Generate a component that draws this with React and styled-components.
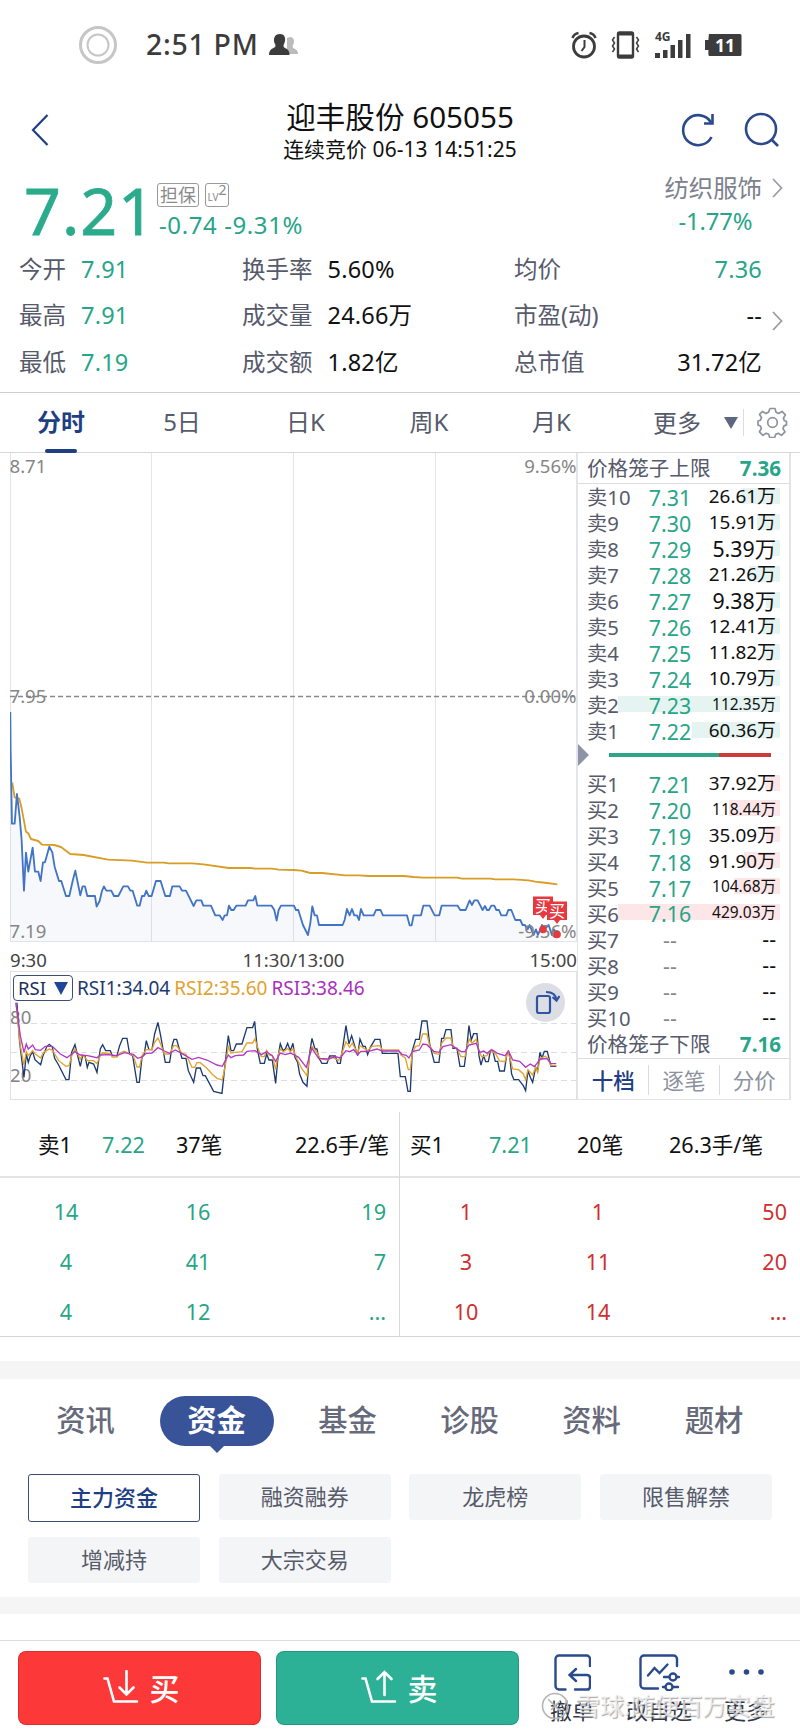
// src/App.jsx
import React from "react";
import styled, { createGlobalStyle } from "styled-components";

const GlobalStyle = createGlobalStyle`
  * { box-sizing: border-box; }
  body {
    margin: 0;
    background: #fff;
    font-family: "Noto Sans", "Noto Sans CJK SC", sans-serif;
    color: #111;
  }
`;

const GREEN = "#27a587";
const RED = "#cf3030";
const NAVY = "#1f3f83";
const GREY = "#565a6b";

const Page = styled.div`
  width: 800px;
  height: 1733px;
  overflow: hidden;
  display: flex;
  flex-direction: column;
  white-space: nowrap;
  line-height: 1;
`;

/* ---------- status bar ---------- */

const StatusBar = styled.div`
  height: 88px;
  padding: 2px 58px 0 78px;
  display: flex;
  align-items: center;
  justify-content: space-between;
`;

const StatusSide = styled.div`
  display: flex;
  align-items: center;
  gap: ${p => p.gap};
`;

const Clock = styled.span`
  font-size: 28.5px;
  font-weight: 500;
  letter-spacing: 0.7px;
  color: #3c3c3c;
  margin: 0 10px 1px 28px;
`;

/* ---------- header ---------- */

const Header = styled.header`
  height: 86px;
  display: grid;
  grid-template-columns: 200px 1fr 200px;
  align-items: center;
`;

const BackIcon = styled.svg`
  margin: 0 0 2px 30px;
`;

const Titles = styled.div`
  text-align: center;
`;

const Name = styled.h1`
  margin: 0;
  font-size: 29.6px;
  font-weight: 400;
  line-height: 36px;
`;

const Session = styled.div`
  font-size: 20.9px;
  letter-spacing: 0.1px;
  line-height: 29px;
`;

const HeaderActions = styled.div`
  display: flex;
  justify-content: flex-end;
  gap: 28px;
  padding: 0 20px 2px 0;
`;

/* ---------- quote ---------- */

const Quote = styled.section`
  height: 71px;
  display: flex;
  padding-left: 24px;
`;

const Price = styled.div`
  width: 135px;
  font-size: 64.5px;
  font-weight: 400;
  -webkit-text-stroke: 0.8px #2bab8c;
  letter-spacing: 1px;
  line-height: 73px;
  color: #2bab8c;
`;

const Change = styled.div`
  flex: 1;
  font-size: 24px;
  letter-spacing: 0.6px;
  color: ${GREEN};
  padding-top: 9px;
`;

const Badges = styled.div`
  display: flex;
  gap: 6px;
  margin: 0 0 6px -2px;
`;

const Badge = styled.span`
  height: 24px;
  width: ${p => p.w};
  border: 1px solid #999;
  border-radius: 3px;
  color: #8a8a8a;
  font-size: ${p => p.size};
  line-height: ${p => p.line};
  letter-spacing: 0;
  text-align: center;

  sup {
    font-size: 14px;
    line-height: 0;
    vertical-align: 6px;
  }
`;

const Sector = styled.div`
  padding: 0 17px 0 0;
  color: #7d818c;
  font-size: 24.4px;
  line-height: 28px;
`;

const SectorName = styled.div`
  display: flex;
  align-items: center;
  gap: 10px;
`;

const SectorChange = styled.div`
  padding: 5px 0 0 14px;
  font-size: 23.8px;
  letter-spacing: -0.1px;
  color: ${GREEN};
`;

const Stats = styled.section`
  height: 148px;
  border-bottom: 1px solid #cfcfcf;
  padding: 1px 17px 0 19px;
  display: grid;
  grid-template-columns: 223px 272px 248px 1fr;
  grid-template-rows: repeat(3, 46.8px);
  align-items: center;
  font-size: 23.5px;
`;

const Stat = styled.div`
  display: flex;
  justify-content: ${p => (p.spread ? "space-between" : "flex-start")};
  gap: 15px;
  color: ${GREY};

  b {
    font-weight: 400;
    letter-spacing: 0.2px;
    color: ${p => (p.green ? GREEN : "#111")};
  }
`;

const StatArrow = styled.svg`
  margin: 10px 0 0 10px;
`;

/* ---------- period tabs ---------- */

const Periods = styled.nav`
  height: 60px;
  border-bottom: 1px solid #d5d7da;
  display: grid;
  grid-template-columns: 122px 120px 127px 120px 125px 129px 1fr;
  align-items: center;
  color: ${GREY};
  font-size: 24px;
  text-align: center;
`;

const Period = styled.div`
  height: 59px;
  line-height: 58px;
  font-weight: ${p => (p.active ? 700 : 400)};
  color: ${p => (p.active ? NAVY : "inherit")};

  &::after {
    content: "";
    display: ${p => (p.active ? "block" : "none")};
    width: 32px;
    height: 4px;
    margin: -2px auto 0;
    border-radius: 2px;
    background: ${NAVY};
  }
`;

const MorePeriods = styled(Period)`
  display: flex;
  align-items: center;
  justify-content: flex-end;
  gap: 23px;
  padding-right: 5px;
`;

const Triangle = styled.i`
  border: 7px solid transparent;
  border-width: ${p => p.h} 7px 0;
  border-top-color: ${p => p.color};
`;

const Settings = styled.div`
  height: 27px;
  border-left: 1px solid #ddd;
  display: flex;
  align-items: center;
  padding-left: 13px;
`;

/* ---------- chart area ---------- */

const Market = styled.section`
  height: 648px;
  padding: 0 9px 0 10px;
  display: flex;
  border-bottom: 1px solid transparent;
`;

const Charts = styled.div`
  width: 567px;
  display: flex;
  flex-direction: column;
`;

const Chart = styled.svg`
  display: block;
  flex: none;
`;

const TimeAxis = styled.div`
  height: 30px;
  padding-top: 8px;
  display: grid;
  grid-template-columns: 1fr 1fr 1fr;
  align-items: center;
  font-size: 18.6px;
  color: #444;

  span:nth-child(2) { text-align: center; }
  span:nth-child(3) { text-align: right; }
`;

const Indicator = styled.div`
  height: 129px;
  border: 1px solid #e0e1e6;
  position: relative;
`;

const IndicatorBar = styled.div`
  position: absolute;
  top: 3px;
  left: 2px;
  display: flex;
  align-items: center;
  gap: 4px;
  font-size: 19px;
`;

const IndicatorPick = styled.span`
  width: 60px;
  height: 26px;
  border: 1px solid #3c5075;
  border-radius: 4px;
  display: flex;
  align-items: center;
  justify-content: center;
  gap: 8px;
  color: #1c2f5c;
  font-size: 18.5px;
`;

const Reading = styled.span`
  padding-top: 1px;
  color: ${p => p.color};
`;

const Rotate = styled.div`
  position: absolute;
  top: 11px;
  right: 11px;
  width: 39px;
  height: 39px;
  border-radius: 50%;
  background: #dddee5;
  display: flex;
  align-items: center;
  justify-content: center;
`;

/* ---------- order book ---------- */

const Book = styled.div`
  width: 214px;
  border: 1px solid #e3e4e8;
  border-width: 0 2px 1px 1px;
  font-size: 20.6px;
  color: ${GREY};
`;

const Cage = styled.div`
  height: ${p => p.h};
  padding: 1px 8px 0 9px;
  border-bottom: 1px solid #dcdde2;
  display: flex;
  align-items: center;
  justify-content: space-between;

  b {
    color: ${GREEN};
  }
`;

const Rows = styled.div`
  padding: 0 9px;
`;

const Row = styled.div`
  height: ${p => p.h};
  padding-top: 2px;
  display: grid;
  grid-template-columns: 53px 60px 1fr;
  align-items: center;
  position: relative;
`;

const DepthBar = styled.i`
  position: absolute;
  top: 4px;
  right: 0;
  height: 16px;
  background: ${p => (p.side === "sell" ? "#e5f4f0" : "#fde6e8")};
`;

const Level = styled.span`
  position: relative;
  font-size: 20.3px;
`;

const LevelPrice = styled.span`
  position: relative;
  font-size: 21.4px;
  text-align: center;
  color: ${p => (p.empty ? "#888" : GREEN)};
`;

const Quantity = styled.span`
  position: relative;
  top: -1px;
  padding-right: 4px;
  text-align: right;
  font-size: ${p => p.size}px;
  color: #111;
`;

const Balance = styled.div`
  height: 27px;
  display: flex;
  align-items: center;
  padding: 0 18px 4px 0;
`;

const Pointer = styled.i`
  border: 11px solid transparent;
  border-width: 11px 0 11px 11px;
  border-left-color: #8c94a6;
  margin-right: 20px;
`;

const Ratio = styled.i`
  height: 4px;
  flex: ${p => p.share};
  background: ${p => p.color};
`;

const BookTabs = styled.div`
  height: 43px;
  display: grid;
  grid-template-columns: repeat(3, 1fr);
  align-items: center;
`;

const BookTab = styled.div`
  height: 30px;
  line-height: 31px;
  text-align: center;
  font-size: 21.5px;
  font-weight: ${p => (p.active ? 500 : 400)};
  color: ${p => (p.active ? NAVY : "#8d92a0")};

  & + & { border-left: 1px solid #d9dbe0; }
`;

/* ---------- order queue ---------- */

const Queue = styled.section`
  height: 225px;
  margin-top: 11px;
  border-bottom: 1px solid #d4d4d4;
  display: grid;
  grid-template-columns: 399px 401px;
`;

const QueueSide = styled.div`
  color: ${p => p.color};
  font-size: 21.6px;

  & + & { border-left: 1px solid #d9d9d9; }
`;

const QueueHead = styled.div`
  height: 66px;
  border-bottom: 2px solid #e4e4e4;
  display: grid;
  grid-template-columns: ${p => p.cols};
  align-items: center;
  color: #111;
  padding: 2px ${p => p.right} 0 ${p => p.left};

  span:nth-child(2) { color: ${GREEN}; }
  span:last-child { text-align: right; }
`;

const QueueRow = styled.div`
  height: 50.3px;
  display: grid;
  grid-template-columns: 132px 132px 1fr;
  align-items: center;
  text-align: center;
  padding-right: 13px;

  &:nth-child(2) { margin-top: 8.5px; }
  span:last-child { text-align: right; }
`;

const Gap = styled.div`
  height: ${p => p.h};
  margin-top: ${p => p.top};
  background: #f5f5f5;
  flex: none;
`;

/* ---------- info tabs ---------- */

const Categories = styled.nav`
  height: 95px;
  padding: 17px 24px 0 25px;
  display: grid;
  grid-template-columns: 121px 141px 121px 123px 121px 1fr;
  justify-items: center;
`;

const Category = styled.div`
  position: relative;
  width: 114px;
  height: 50px;
  border-radius: 25px;
  line-height: 49px;
  text-align: center;
  font-size: 29.3px;
  font-weight: ${p => (p.active ? 700 : 500)};
  color: ${p => (p.active ? "#fff" : "#666a7a")};
  background: ${p => (p.active ? "#385397" : "transparent")};

  &::after {
    content: "";
    display: ${p => (p.active ? "block" : "none")};
    position: absolute;
    top: 49px;
    left: 49px;
    border: 8px solid transparent;
    border-top-color: #385397;
  }
`;

const Chips = styled.div`
  height: 123px;
  padding: 0 28px;
  display: grid;
  grid-template-columns: repeat(4, 172px);
  justify-content: space-between;
  align-items: start;
  grid-template-rows: 63px 60px;
`;

const Chip = styled.div`
  height: ${p => (p.active ? 48 : 46)}px;
  line-height: ${p => (p.active ? 45 : 43)}px;
  border: 1px solid ${p => (p.active ? "#3c4f75" : "#f4f5f6")};
  border-radius: 3px;
  background: ${p => (p.active ? "#fff" : "#f4f5f6")};
  color: ${p => (p.active ? NAVY : GREY)};
  font-weight: ${p => (p.active ? 500 : 400)};
  font-size: 22px;
  text-align: center;
`;

/* ---------- trade bar ---------- */

const TradeBar = styled.footer`
  flex: none;
  height: 93px;
  margin-top: 26px;
  border-top: 1px solid #ddd;
  padding: 10px 0 0 18px;
  display: flex;
  align-items: flex-start;
  position: relative;
`;

const TradeButton = styled.button`
  width: 243px;
  height: 74px;
  margin-right: 15px;
  padding: 0 0 2px 3px;
  border: 1px solid rgba(0, 0, 0, 0.15);
  border-radius: 8px;
  background: ${p => p.color};
  color: #fff;
  font: 500 30px "Noto Sans CJK SC", sans-serif;
  line-height: 1;
  display: flex;
  align-items: center;
  justify-content: center;
  gap: 11px;
`;

const Action = styled.div`
  width: ${p => p.w};
  height: 76px;
  padding-top: 3px;
  display: flex;
  flex-direction: column;
  align-items: center;
  gap: 8px;
  font-size: 22px;
  color: #32384a;
`;

const Watermark = styled.div`
  position: absolute;
  left: 541px;
  top: 51px;
  display: flex;
  align-items: center;
  gap: 7px;
  font-size: 24px;
  font-weight: 500;
  color: rgba(255, 255, 255, 0.7);
  text-shadow: 1px 1px 1px rgba(90, 90, 90, 0.5);
`;

/* ---------- data ---------- */

const periods = ["分时", "5日", "日K", "周K", "月K"];

const sells = [
  ["卖10", "7.31", "26.61万", 39],
  ["卖9", "7.30", "15.91万", 23],
  ["卖8", "7.29", "5.39万", 8],
  ["卖7", "7.28", "21.26万", 31],
  ["卖6", "7.27", "9.38万", 14],
  ["卖5", "7.26", "12.41万", 18],
  ["卖4", "7.25", "11.82万", 17],
  ["卖3", "7.24", "10.79万", 16],
  ["卖2", "7.23", "112.35万", 162],
  ["卖1", "7.22", "60.36万", 88],
];

const buys = [
  ["买1", "7.21", "37.92万", 15],
  ["买2", "7.20", "118.44万", 51],
  ["买3", "7.19", "35.09万", 14],
  ["买4", "7.18", "91.90万", 36],
  ["买5", "7.17", "104.68万", 46],
  ["买6", "7.16", "429.03万", 162],
  ["买7", "--", "--", 0],
  ["买8", "--", "--", 0],
  ["买9", "--", "--", 0],
  ["买10", "--", "--", 0],
];

const chips = ["主力资金", "融资融券", "龙虎榜", "限售解禁", "增减持", "大宗交易"];
const categories = ["资讯", "资金", "基金", "诊股", "资料", "题材"];

// series are sampled at a third of a pixel, the groups below scale them down
const priceLine =
  "30,66 31,180 35,401 43,401 50,312 58,380 64,450 71,602 77,488 84,545 97,473 104,545 114,545 121,573 128,517 134,517 147,470 156,487 163,530 176,573 183,573 197,618 207,618 217,573 225,542 240,616 247,589 254,589 261,618 284,618 289,650 298,633 305,603 311,589 318,602 333,602 341,618 354,618 369,589 383,589 390,602 397,602 411,647 418,647 425,618 432,618 438,602 445,618 454,618 467,573 481,573 495,618 509,618 516,589 538,589 545,602 557,602 580,648 588,631 603,631 609,647 632,647 645,676 658,676 667,690 673,676 680,676 686,647 693,660 700,660 708,647 736,647 743,631 759,631 765,618 771,647 814,647 822,660 829,692 835,660 842,647 881,647 887,660 894,660 908,705 923,735 930,700 936,649 943,676 950,676 956,705 1027,705 1033,690 1040,657 1048,676 1055,657 1062,676 1070,676 1076,690 1082,657 1090,676 1120,676 1127,660 1141,660 1148,676 1220,676 1228,706 1234,706 1240,676 1262,676 1269,647 1288,647 1303,676 1317,676 1324,647 1372,647 1380,660 1396,660 1408,631 1415,645 1422,631 1432,631 1447,660 1454,648 1460,660 1466,660 1473,647 1482,647 1488,660 1496,660 1503,676 1518,676 1524,660 1533,660 1545,690 1560,690 1567,705 1574,705 1582,718 1588,705 1600,735 1607,718 1613,735 1625,705 1635,715 1645,705 1655,735 1661,718 1671,735";
const averageLine =
  "36,278 43,322 57,326 64,355 77,425 84,430 92,447 114,453 125,464 162,465 182,471 210,492 250,495 323,509 395,512 440,518 490,518 505,520 575,520 610,523 685,534 750,534 765,536 815,536 835,539 880,540 903,542 930,549 965,549 1035,556 1075,556 1105,558 1210,558 1240,561 1270,563 1370,563 1385,566 1470,566 1485,568 1540,568 1585,571 1605,575 1640,579 1671,583";
const rsi1 =
  "45,133 50,133 58,250 71,355 78,285 84,310 90,290 97,278 104,302 121,317 128,290 140,262 147,256 156,264 163,298 175,318 197,362 206,362 214,280 224,257 232,290 240,322 247,290 254,290 261,325 266,310 280,315 290,340 300,270 307,257 316,275 330,275 336,290 350,290 358,260 367,238 380,238 388,285 397,290 410,370 417,370 425,295 432,285 438,245 446,272 455,272 463,225 473,190 481,230 495,310 508,310 516,258 521,241 529,241 537,270 545,298 557,298 564,335 580,370 588,327 600,327 608,350 615,350 640,397 665,403 675,310 684,230 692,275 700,275 708,255 725,255 740,206 757,206 763,187 771,270 780,313 792,313 799,285 806,303 816,303 826,373 833,295 840,254 848,275 855,270 862,253 870,275 878,253 884,295 892,310 898,345 908,370 920,382 927,290 935,238 944,270 950,270 956,298 965,313 980,313 988,291 1005,291 1012,313 1020,313 1026,275 1037,200 1046,255 1054,230 1072,290 1079,240 1088,262 1095,262 1102,287 1110,265 1124,241 1139,241 1146,283 1193,283 1200,353 1215,353 1223,397 1230,397 1236,275 1246,241 1257,241 1265,186 1280,186 1288,255 1302,310 1316,310 1324,238 1330,238 1337,212 1352,212 1358,268 1370,268 1379,322 1392,322 1400,260 1406,200 1413,243 1420,224 1430,224 1436,290 1442,318 1450,290 1456,308 1464,308 1470,277 1478,277 1485,307 1492,307 1498,336 1512,336 1520,283 1527,283 1534,345 1541,362 1555,362 1569,380 1576,395 1583,335 1590,355 1597,370 1606,325 1612,335 1619,280 1625,298 1632,277 1641,277 1652,322 1668,322";
const rsi2 =
  "47,133 60,260 71,318 78,278 84,290 97,275 105,285 121,297 130,280 147,270 156,273 175,305 197,322 206,320 214,292 224,270 240,300 247,288 262,305 280,305 290,314 300,290 307,282 330,283 336,294 350,294 358,283 372,277 388,285 399,290 410,324 418,324 425,290 438,272 455,272 463,250 473,237 481,255 492,285 508,285 520,260 529,260 545,283 557,286 575,325 583,325 590,311 600,311 620,328 635,345 650,358 666,363 675,320 684,263 692,282 705,280 725,278 740,252 757,252 764,239 771,262 783,293 792,293 799,274 806,288 816,290 826,331 833,290 840,270 850,278 862,268 870,278 878,270 890,300 905,330 920,350 928,290 935,262 950,280 960,300 982,303 995,294 1015,305 1026,280 1037,248 1048,265 1056,252 1072,282 1079,260 1102,275 1115,262 1139,260 1146,273 1195,273 1202,288 1215,297 1224,332 1230,332 1236,280 1246,262 1257,260 1267,225 1280,225 1288,260 1302,283 1316,286 1324,253 1337,237 1352,237 1358,264 1370,268 1382,293 1394,293 1406,240 1415,252 1428,241 1436,275 1444,293 1460,290 1470,275 1485,283 1498,306 1514,308 1522,278 1530,300 1537,330 1555,332 1569,345 1576,362 1583,332 1597,348 1606,325 1612,340 1619,298 1635,292 1643,298 1652,320 1668,320";
const rsi3 =
  "47,133 60,230 71,280 78,255 84,270 97,258 105,272 121,274 135,262 156,262 180,285 200,296 214,285 224,278 240,288 262,290 290,296 300,288 325,287 350,290 372,281 399,286 412,298 425,294 438,283 455,282 473,266 492,276 508,283 525,273 545,284 575,301 595,295 620,303 650,318 666,322 675,305 684,288 692,296 705,290 730,288 740,277 764,275 783,287 799,278 816,290 826,307 840,282 855,287 870,282 895,295 918,325 928,290 935,268 955,298 985,300 1005,293 1020,297 1037,275 1048,278 1060,272 1072,287 1082,277 1105,277 1130,270 1146,276 1195,276 1205,286 1218,289 1226,297 1236,278 1257,273 1268,255 1280,257 1300,277 1316,280 1328,263 1352,257 1360,263 1382,278 1394,278 1406,258 1428,253 1438,280 1450,276 1460,283 1474,272 1492,283 1514,290 1525,276 1537,303 1558,307 1576,325 1590,315 1602,323 1610,313 1620,300 1640,299 1652,314 1668,314";

/* ---------- small icons ---------- */

const Chevron = ({ as: Tag = "svg" }) => (
  <Tag width="11" height="20" viewBox="0 0 11 20" fill="none" stroke="#9a9da6" strokeWidth="1.8">
    <path d="M1 1l8.5 9L1 19" />
  </Tag>
);

const Cart = ({ up }) => (
  <svg width="36" height="34" viewBox="0 0 36 34" fill="none" stroke="#fff" strokeWidth="2.6" strokeLinecap="round">
    <path d="M1.5 8.5h3L11 31.5h23" />
    <path d={up ? "M23.5 25V2M16.5 9l7-7 7 7" : "M23.5 1v23M16.5 17.5l7 7 7-7"} />
  </svg>
);

function quantitySize(text) {
  if (text.length > 6) return 15.5;
  return text.length > 5 ? 18.9 : 21.3;
}

function BookSide({ rows, side, h }) {
  return (
    <Rows>
      {rows.map(([level, price, qty, depth]) => (
        <Row key={level} h={h}>
          {depth > 0 && <DepthBar side={side} style={{ width: depth }} />}
          <Level>{level}</Level>
          <LevelPrice empty={price === "--"}>{price}</LevelPrice>
          <Quantity size={quantitySize(qty)}>{qty}</Quantity>
        </Row>
      ))}
    </Rows>
  );
}

function PriceChart() {
  return (
    <Chart width="567" height="489" viewBox="10 453 567 489">
      <path
        d="M10.5 453v489M151.5 453v489M293.5 453v489M435.5 453v489M576.5 453v489M10 941.5h567"
        fill="none"
        stroke="#e4e5ea"
      />
      <path d="M10 696.5h567" stroke="#85888e" strokeWidth="1.3" strokeDasharray="5 3" />
      <g transform="translate(0.3 690) scale(0.33333)" fill="none" strokeWidth="5.5" strokeLinejoin="round">
        <polygon points={`${priceLine} 1671,754 30,754`} fill="#4a74c0" fillOpacity="0.05" />
        <polyline points={averageLine} stroke="#d99d26" />
        <polyline points={priceLine} stroke="#4274c6" />
      </g>
      <g fill="#858585" fontSize="18.6">
        <text x="9.5" y="473">8.71</text>
        <text x="9.5" y="702.5">7.95</text>
        <text x="9.5" y="938">7.19</text>
        <g textAnchor="end">
          <text x="576.5" y="473">9.56%</text>
          <text x="576.5" y="702.5">0.00%</text>
          <text x="576.5" y="938">-9.56%</text>
        </g>
      </g>
      <g fill="#e5393f">
        <path d="M533 896.5h20v18.500h-7l-3 4-3-4h-7z" />
        <text x="543" y="912" fontSize="16" fill="#fff" textAnchor="middle">买</text>
        <path d="M547 901.5h20v18.500h-7l-3 4-3-4h-7z" />
        <text x="557" y="917" fontSize="16" fill="#fff" textAnchor="middle">买</text>
        <circle cx="543" cy="929.5" r="3.8" />
        <circle cx="557" cy="934.5" r="3.8" />
      </g>
    </Chart>
  );
}

function RsiPanel() {
  return (
    <Indicator>
      <Chart width="565" height="127" viewBox="11 973 565 127">
        <path d="M11 1024.5h566M11 1053.5h566M11 1081.5h566" stroke="#dcdde2" strokeDasharray="6 4" />
        <g fill="#858585" fontSize="18.6">
          <text x="10" y="1025">80</text>
          <text x="10" y="1082.5">20</text>
        </g>
        <g transform="translate(0.3 960) scale(0.33333)" fill="none" strokeWidth="4">
          <polyline points={rsi1} stroke="#1d3a70" />
          <polyline points={rsi2} stroke="#e2a22e" />
          <polyline points={rsi3} stroke="#b239c4" />
        </g>
      </Chart>
      <IndicatorBar>
        <IndicatorPick>
          RSI
          <Triangle color="#1f4696" h="13px" />
        </IndicatorPick>
        <Reading color="#1d3a70">RSI1:34.04</Reading>
        <Reading color="#e2a22e">RSI2:35.60</Reading>
        <Reading color="#a82fbd">RSI3:38.46</Reading>
      </IndicatorBar>
      <Rotate>
        <svg width="28" height="26" viewBox="0 0 28 26" fill="none" stroke="#2f55a0" strokeWidth="2.2">
          <rect x="5" y="6" width="13" height="17" rx="2" />
          <path d="M14 2c6 0 10 3 10.500 8M20.500 7l4 3.500 3-4.500" />
        </svg>
      </Rotate>
    </Indicator>
  );
}

export default function App() {
  return (
    <>
      <GlobalStyle />
      <Page>
        <StatusBar>
          <StatusSide gap="0">
            <svg width="40" height="40" viewBox="0 0 40 40" fill="none" stroke="#c6c6c6">
              <circle cx="20" cy="20" r="17.5" strokeWidth="3" />
              <circle cx="20" cy="20" r="10.5" strokeWidth="2" />
            </svg>
            <Clock>2:51 PM</Clock>
            <svg width="31" height="22" viewBox="0 0 31 22">
              <path fill="#bbb" d="M21 3c4 0 5 4.500 3 8-1 2 0 3 2 4s3 2 3 5H18V4z" />
              <path fill="#3c3c3c" d="M11 0c5 0 6.500 5 4 10-1 2-.500 3 1 4 3 1 4.500 3 4.500 7H0c0-4 1.500-6 4.500-7 2-1 2.500-2 1.500-4C3.500 5 5.500 0 11 0z" />
            </svg>
          </StatusSide>
          <StatusSide gap="14.5px">
            <svg width="26" height="28" viewBox="0 0 26 28" fill="none" stroke="#3c3c3c">
              <circle cx="13" cy="15.5" r="10.5" strokeWidth="2.8" />
              <path d="M13.500 9v7l-3 4" strokeWidth="2" />
              <path d="M1.500 7c1-3 3-4.500 6-5M24.500 7c-1-3-3-4.500-6-5" strokeWidth="2.6" />
            </svg>
            <svg width="29" height="28" viewBox="0 0 29 28" fill="none" stroke="#3c3c3c">
              <rect x="7" y="1.5" width="15" height="25" rx="1.5" strokeWidth="2.4" />
              <path d="M7 3h15M7 25h15" strokeWidth="3" />
              <path d="M3.500 6l-2 3 2 3-2 3 2 3-2 3M25.500 6l2 3-2 3 2 3-2 3 2 3" strokeWidth="1.5" />
            </svg>
            <svg width="36" height="32" viewBox="0 -5 36 32" fill="#3c3c3c">
              <text x="0" y="7" fontSize="12" fontWeight="700">4G</text>
              <path d="M0 19h5v5H0zM8 16h4.500v8H8zM15.500 11h4.500v13h-4.500zM23 6h4.500v18H23zM31 0h4.500v24H31z" />
            </svg>
            <svg width="37" height="24" viewBox="0 0 38 24" preserveAspectRatio="none">
              <path fill="#3c3c3c" d="M4 1h32a1.500 1.500 0 0 1 1.500 1.500v19A1.500 1.500 0 0 1 36 23H5a1.500 1.500 0 0 1-1.500-1.500V17H0V7h3.500z" />
              <text x="20.5" y="18.5" fontSize="18" fontWeight="700" fill="#fff" textAnchor="middle">11</text>
            </svg>
          </StatusSide>
        </StatusBar>

        <Header>
          <BackIcon width="20" height="34" viewBox="0 0 20 34" fill="none" stroke={NAVY} strokeWidth="2.2">
            <path d="M17.500 2L3 17l14.500 15" />
          </BackIcon>
          <Titles>
            <Name>迎丰股份 605055</Name>
            <Session>连续竞价 06-13 14:51:25</Session>
          </Titles>
          <HeaderActions>
            <svg width="36" height="36" viewBox="0 0 36 36" fill="none" stroke="#2a4a8c" strokeWidth="2.6">
              <path d="M31 10.500A15 15 0 1 0 31.500 25" />
              <path d="M32.500 2v9.500H24" />
            </svg>
            <svg width="36" height="36" viewBox="0 0 36 36" fill="none" stroke="#2a4a8c" strokeWidth="2.6">
              <circle cx="17" cy="17" r="15" />
              <path d="M27 27l7 7" />
            </svg>
          </HeaderActions>
        </Header>

        <Quote>
          <Price>7.21</Price>
          <Change>
            <Badges>
              <Badge w="42px" size="18px" line="22px">担保</Badge>
              <Badge w="24px" size="10px" line="26px">LV<sup>2</sup></Badge>
            </Badges>
            -0.74 -9.31%
          </Change>
          <Sector>
            <SectorName>
              纺织服饰
              <Chevron />
            </SectorName>
            <SectorChange>-1.77%</SectorChange>
          </Sector>
        </Quote>

        <Stats>
          <Stat green>今开<b>7.91</b></Stat>
          <Stat>换手率<b>5.60%</b></Stat>
          <Stat green spread>均价<b>7.36</b></Stat>
          <span />
          <Stat green>最高<b>7.91</b></Stat>
          <Stat>成交量<b>24.66万</b></Stat>
          <Stat spread>市盈(动)<b>--</b></Stat>
          <Chevron as={StatArrow} />
          <Stat green>最低<b>7.19</b></Stat>
          <Stat>成交额<b>1.82亿</b></Stat>
          <Stat spread>总市值<b>31.72亿</b></Stat>
        </Stats>

        <Periods>
          {periods.map((p, i) => (
            <Period key={p} active={i === 0}>{p}</Period>
          ))}
          <MorePeriods>
            更多
            <Triangle color="#5c6880" h="12px" />
          </MorePeriods>
          <Settings>
            <svg width="31" height="31" viewBox="0 0 31 31" fill="none" stroke="#8f939c" strokeWidth="1.7">
              <circle cx="15.5" cy="15.5" r="4.8" />
              <path strokeLinejoin="round" d="M13 1.500h5l1 3.800 2.600 1.100 3.400-2 3.400 3.500-2 3.400 1.100 2.500 2 .500v3.600l-2.500 1-1 2.700 2 3.300-3.500 3.400-3.300-2-2.500 1.100-1 3.100h-5l-1-3.200-2.500-1-3.300 2-3.500-3.500 2-3.300-1-2.500-2.400-1v-4l2.400-.800 1.100-2.500-2-3.400L5.500 4.400l3.400 2 2.500-1.100z" />
            </svg>
          </Settings>
        </Periods>

        <Market>
          <Charts>
            <PriceChart />
            <TimeAxis>
              <span>9:30</span>
              <span>11:30/13:00</span>
              <span>15:00</span>
            </TimeAxis>
            <RsiPanel />
          </Charts>
          <Book>
            <Cage h="30.5px">价格笼子上限<b>7.36</b></Cage>
            <BookSide rows={sells} side="sell" h="26px" />
            <Balance>
              <Pointer />
              <Ratio share={110} color="#2fa587" />
              <Ratio share={52} color="#cf3b3b" />
            </Balance>
            <BookSide rows={buys} side="buy" h="25.95px" />
            <Cage h="29px">价格笼子下限<b>7.16</b></Cage>
            <BookTabs>
              <BookTab active>十档</BookTab>
              <BookTab>逐笔</BookTab>
              <BookTab>分价</BookTab>
            </BookTabs>
          </Book>
        </Market>

        <Queue>
          <QueueSide color={GREEN}>
            <QueueHead cols="64px 74px 52px 1fr" left="38px" right="10px">
              <span>卖1</span><span>7.22</span><span>37笔</span><span>22.6手/笔</span>
            </QueueHead>
            <QueueRow><span>14</span><span>16</span><span>19</span></QueueRow>
            <QueueRow><span>4</span><span>41</span><span>7</span></QueueRow>
            <QueueRow><span>4</span><span>12</span><span>...</span></QueueRow>
          </QueueSide>
          <QueueSide color={RED}>
            <QueueHead cols="79px 88px 52px 1fr" left="10px" right="37px">
              <span>买1</span><span>7.21</span><span>20笔</span><span>26.3手/笔</span>
            </QueueHead>
            <QueueRow><span>1</span><span>1</span><span>50</span></QueueRow>
            <QueueRow><span>3</span><span>11</span><span>20</span></QueueRow>
            <QueueRow><span>10</span><span>14</span><span>...</span></QueueRow>
          </QueueSide>
        </Queue>

        <Gap h="18px" top="24px" />
        <Categories>
          {categories.map(c => (
            <Category key={c} active={c === "资金"}>{c}</Category>
          ))}
        </Categories>
        <Chips>
          {chips.map((c, i) => (
            <Chip key={c} active={i === 0}>{c}</Chip>
          ))}
        </Chips>
        <Gap h="17px" top="0" />

        <TradeBar>
          <TradeButton color="#fd3838"><Cart />买</TradeButton>
          <TradeButton color="#2db196"><Cart up />卖</TradeButton>
          <Action w="76px">
            <svg width="37" height="37" viewBox="0 0 37 37" fill="none" stroke="#2a4a8c" strokeWidth="2.4" strokeLinecap="round">
              <path d="M36 12V5a3.500 3.500 0 0 0-3.500-3.500H5A3.500 3.500 0 0 0 1.500 5v27A3.500 3.500 0 0 0 5 35.500h6.500" />
              <path d="M22 15l-6.500 6 6.500 6M16 21h17c2 0 3 1 3 3v8.500c0 2-1 3-3 3H21" />
            </svg>
            撤单
          </Action>
          <Action w="98px">
            <svg width="41" height="37" viewBox="0 0 41 37" fill="none" stroke="#2a4a8c" strokeWidth="2.4" strokeLinecap="round">
              <path d="M38 12V5a3.500 3.500 0 0 0-3.500-3.500H5A3.500 3.500 0 0 0 1.500 5v26A3.500 3.500 0 0 0 5 34.500h14" />
              <path d="M9 21.500l6.500-7.500 5 5 8-8.500" />
              <path d="M25 23h5M38 23h2M24 33h2M34 33h5" />
              <circle cx="34" cy="23" r="3.5" />
              <circle cx="30" cy="33" r="3.5" />
            </svg>
            改自选
          </Action>
          <Action w="76px">
            <svg width="37" height="37" viewBox="0 0 37 37" fill="#2a4a8c">
              <circle cx="4" cy="18" r="2.8" />
              <circle cx="18.5" cy="18" r="2.8" />
              <circle cx="33" cy="18" r="2.8" />
            </svg>
            更多
          </Action>
          <Watermark>
            <svg width="28" height="28" viewBox="0 0 28 28" fill="none" stroke="#b5b5b5" strokeWidth="1.6">
              <circle cx="14" cy="14" r="12.5" />
              <path d="M7 7l14 14M10 18l8-8" />
            </svg>
            雪球:随便百万实盘
          </Watermark>
        </TradeBar>
      </Page>
    </>
  );
}
